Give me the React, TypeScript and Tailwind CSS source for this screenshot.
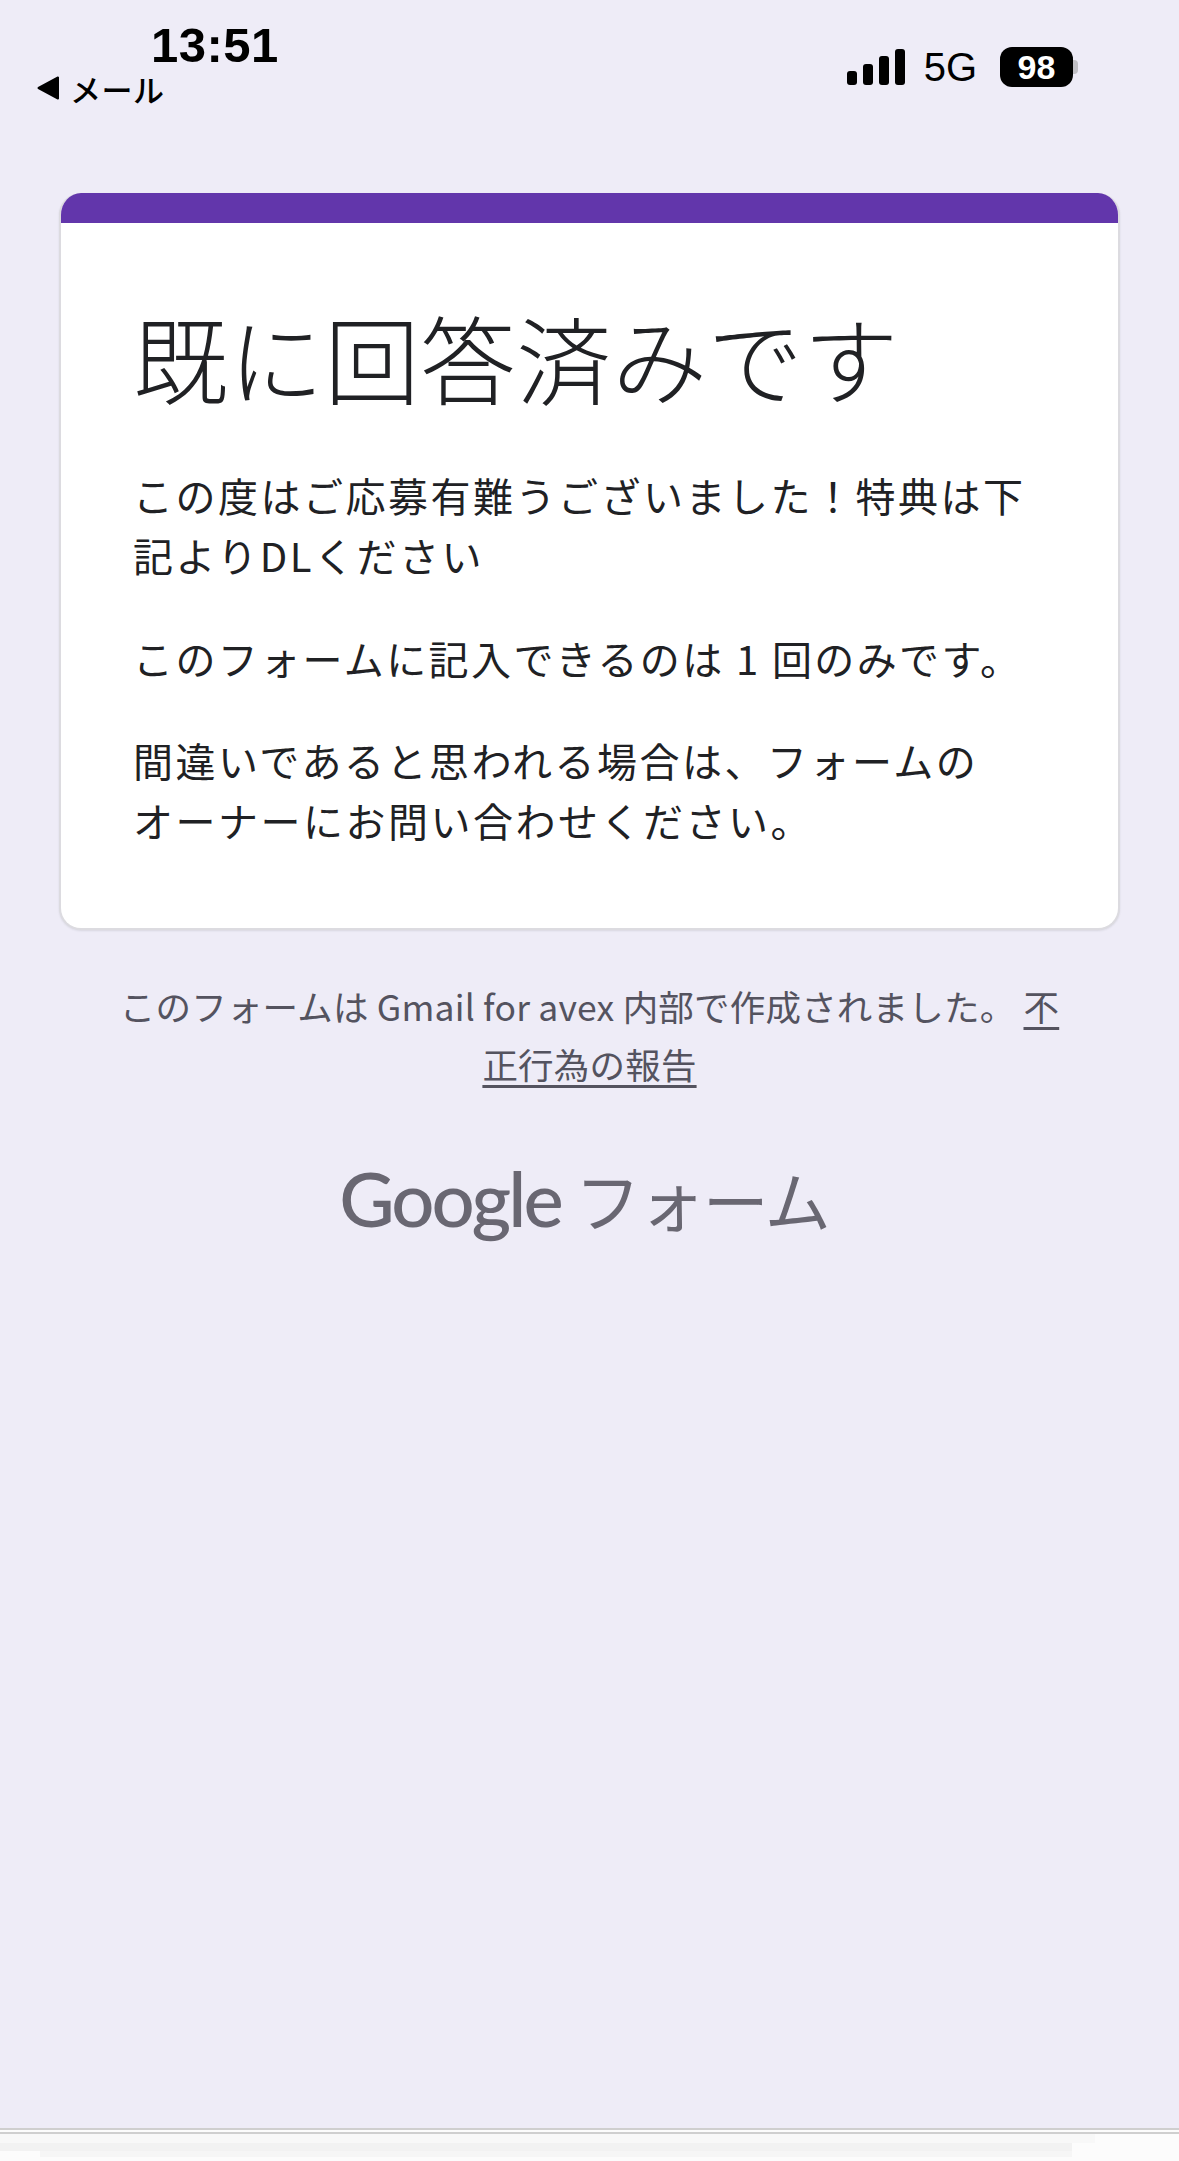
import React from 'react';

const jp = { fontFamily: '"Noto Sans CJK JP", "Noto Sans", sans-serif' };

function StatusBar() {
  return (
    <div className="flex justify-between items-start h-[193px] pl-[37px] pr-[101px] pt-[17px] text-black">
      <div className="flex flex-col">
        <div className="ml-[114px] h-[56px] text-[49px] leading-[56px] font-semibold font-['Liberation_Sans',sans-serif] tracking-[0.5px]">13:51</div>
        <div className="flex items-center gap-[11px] h-[36px] mt-[-2px]">
          <svg width="22" height="24" viewBox="0 0 22 24" className="mt-[-2px]">
            <path d="M21 1.5 V22.5 L1.5 12 Z" fill="#000" stroke="#000" strokeWidth="2" strokeLinejoin="round" />
          </svg>
          <span className="text-[31px] leading-[36px] font-medium tracking-[0.5px]" style={jp}>メール</span>
        </div>
      </div>
      <div className="flex items-center h-[44px] mt-[28px]">
        <svg width="58" height="38" viewBox="0 0 58 38" fill="#000">
          <rect x="0" y="23" width="10" height="14" rx="3" />
          <rect x="16" y="16" width="10" height="21" rx="3" />
          <rect x="32" y="8" width="10" height="29" rx="3" />
          <rect x="48" y="1" width="10" height="36" rx="3" />
        </svg>
        <span className="ml-[19px] text-[40px] leading-[44px] font-['Liberation_Sans',sans-serif]">5G</span>
        <div className="ml-[23px] flex items-center">
          <div className="w-[73px] h-[40px] rounded-[12px] bg-black text-white flex items-center justify-center text-[34px] font-bold font-['Liberation_Sans',sans-serif]">98</div>
          <div className="w-[5px] h-[14px] rounded-r-[4px] bg-[#c0bfc4]" />
        </div>
      </div>
    </div>
  );
}

function Card() {
  return (
    <div className="mx-[59px] w-[1061px] rounded-[22px] overflow-hidden bg-white border-x-2 border-b-2 border-[#dcdbe0] shadow-[0_1px_2px_rgba(60,64,67,0.12)] box-border">
      <div className="h-[30px] bg-[#6236ab] mx-[-2px]" />
      <div className="pl-[72px] pr-[60px] pt-[74px] pb-[78px] text-[#202124]" style={jp}>
        <h1 className="text-[95px] leading-[120px] font-light tracking-[0.8px] mb-[48px]">既に回答済みです</h1>
        <p className="text-[40px] leading-[60px] tracking-[2.5px] mb-[43px]">この度はご応募有難うございました！特典は下<br />記よりDLください</p>
        <p className="text-[40px] leading-[60px] tracking-[2.4px] mb-[42px]">このフォームに記入できるのは 1 回のみです。</p>
        <p className="text-[40px] leading-[60px] tracking-[2.5px]">間違いであると思われる場合は、フォームの<br />オーナーにお問い合わせください。</p>
      </div>
    </div>
  );
}

export default function App() {
  return (
    <div className="w-[1179px] h-[2161px] bg-[#eeecf7] flex flex-col overflow-hidden">
      <StatusBar />
      <Card />
      <p className="mt-[47px] mx-[110px] text-center text-[35.5px] leading-[58px] tracking-[0.2px] text-[#54535f]" style={jp}>
        このフォームは Gmail for avex 内部で作成されました。 <a className="underline underline-offset-[6px]">不<br />正行為の報告</a>
      </p>
      <div className="mt-[60px] pr-[11px] flex justify-center items-center gap-[14px] text-[#696772]">
        <span className="text-[76px] leading-[90px] font-medium tracking-[-3px] font-['Lato',sans-serif]">Google</span>
        <span className="text-[66px] leading-[90px] font-normal tracking-[-2px]" style={jp}>フォーム</span>
      </div>
      <div className="mt-auto h-[33px] border-t-[6px] border-double border-[#cfcfcf] bg-[#fcfcfc] flex flex-col">
        <div className="h-[9px] mr-[84px] bg-[#f8f8f8]" />
        <div className="h-[8px] mr-[107px] bg-[#f2f2f2]" />
        <div className="h-[6px] ml-[40px] mr-[107px] bg-[#f6f6f6]" />
      </div>
    </div>
  );
}
